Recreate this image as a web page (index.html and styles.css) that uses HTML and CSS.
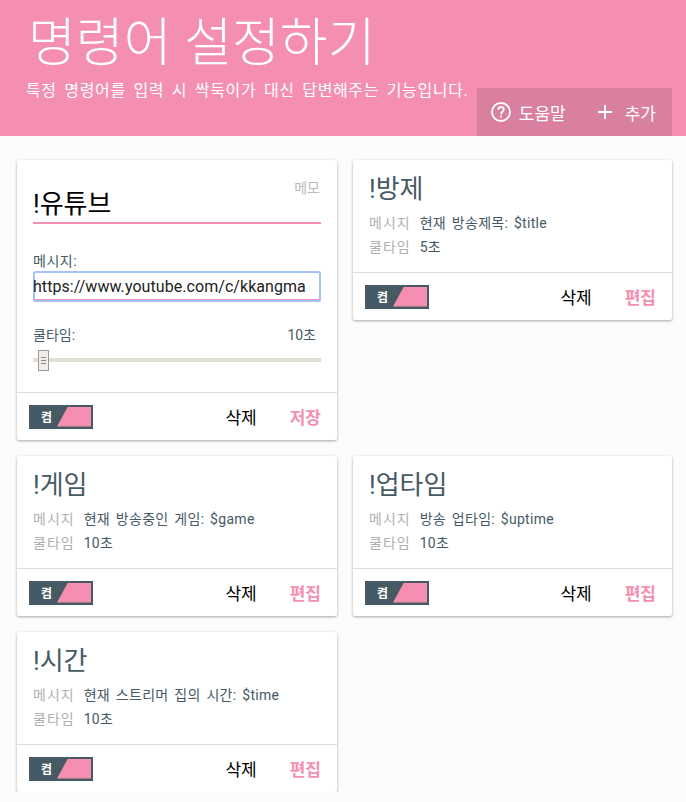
FILE: index.html
```html
<!DOCTYPE html>
<html lang="ko">
<head>
	<meta charset="utf-8">
	<title>명령어 설정하기</title>
	<link rel="stylesheet" href="styles.css">
</head>
<body>
	<div class="header">
		<div class="header-text">
			<h1>명령어 설정하기</h1>
			<p>특정 명령어를 입력 시 싹둑이가 대신 답변해주는 기능입니다.</p>
		</div>
		<div class="actions">
			<span class="action">
				<svg width="22" height="22" viewBox="0 0 22 22" fill="none" stroke="#fff">
					<circle cx="11" cy="11" r="9" stroke-width="1.8"/>
					<path d="M8.2 8.8c0-1.7 1.2-2.8 2.8-2.8s2.8 1 2.8 2.6c0 2.2-2.8 2.2-2.8 4.6" stroke-width="1.8"/>
					<path d="M11 14.6v2" stroke-width="1.8"/>
				</svg>
				도움말
			</span>
			<span class="action">
				<svg class="plus" width="18" height="18" viewBox="0 0 18 18" fill="none" stroke="#fff" stroke-width="2">
					<path d="M9 2v14M2 9h14"/>
				</svg>
				추가
			</span>
		</div>
	</div>

	<div class="cards">
		<div class="card card-edit">
			<div class="card-body">
				<span class="memo">메모</span>
				<input class="name-input" type="text" value="!유튜브">
				<label class="field-label">메시지:</label>
				<input class="msg-input" type="text" value="https://www.youtube.com/c/kkangma">
				<div class="cool-row">
					<span>쿨타임:</span>
					<span>10초</span>
				</div>
				<div class="slider">
					<div class="thumb"><i></i><i></i><i></i></div>
				</div>
			</div>
			<div class="card-foot">
				<div class="toggle"><span>켬</span><b></b></div>
				<a class="btn">삭제</a>
				<a class="btn btn-pink">저장</a>
			</div>
		</div>

		<div class="card">
			<div class="card-body">
				<h2>!방제</h2>
				<div class="info"><span class="key">메시지</span><span>현재 방송제목: $title</span></div>
				<div class="info"><span class="key">쿨타임</span><span>5초</span></div>
			</div>
			<div class="card-foot">
				<div class="toggle"><span>켬</span><b></b></div>
				<a class="btn">삭제</a>
				<a class="btn btn-pink">편집</a>
			</div>
		</div>

		<div class="card">
			<div class="card-body">
				<h2>!게임</h2>
				<div class="info"><span class="key">메시지</span><span>현재 방송중인 게임: $game</span></div>
				<div class="info"><span class="key">쿨타임</span><span>10초</span></div>
			</div>
			<div class="card-foot">
				<div class="toggle"><span>켬</span><b></b></div>
				<a class="btn">삭제</a>
				<a class="btn btn-pink">편집</a>
			</div>
		</div>

		<div class="card">
			<div class="card-body">
				<h2>!업타임</h2>
				<div class="info"><span class="key">메시지</span><span>방송 업타임: $uptime</span></div>
				<div class="info"><span class="key">쿨타임</span><span>10초</span></div>
			</div>
			<div class="card-foot">
				<div class="toggle"><span>켬</span><b></b></div>
				<a class="btn">삭제</a>
				<a class="btn btn-pink">편집</a>
			</div>
		</div>

		<div class="card">
			<div class="card-body">
				<h2>!시간</h2>
				<div class="info"><span class="key">메시지</span><span>현재 스트리머 집의 시간: $time</span></div>
				<div class="info"><span class="key">쿨타임</span><span>10초</span></div>
			</div>
			<div class="card-foot">
				<div class="toggle"><span>켬</span><b></b></div>
				<a class="btn">삭제</a>
				<a class="btn btn-pink">편집</a>
			</div>
		</div>
	</div>
</body>
</html>
```

FILE: styles.css
```css
* {
	margin: 0;
	padding: 0;
	box-sizing: border-box;
	outline: none;
}
body {
	background: #fcfcfc;
	color: #455a64;
	font-family: Roboto, "Noto Sans CJK KR", sans-serif;
	font-size: 14px;
}

.header {
	display: flex;
	justify-content: space-between;
	height: 136px;
	padding-left: 26px;
	padding-right: 14px;
	background: #f48fb1;
	color: #fff;
}
.header-text h1 {
	margin-top: 15px;
	margin-left: 2px;
	height: 58px;
	line-height: 58px;
	font-size: 52px;
	font-weight: 300;
	white-space: nowrap;
}
.header-text p {
	margin-top: 7px;
	line-height: 21px;
	font-size: 16px;
	letter-spacing: 0.65px;
	word-spacing: 3px;
	white-space: nowrap;
}
.actions {
	display: flex;
	align-items: center;
	align-self: flex-end;
	gap: 30px;
	height: 48px;
	padding: 0 16px 0 13px;
	background: #d97f9f;
	font-size: 17px;
}
.action {
	display: flex;
	align-items: center;
	gap: 7px;
}
.plus {
	margin-right: 4px;
}

.cards {
	display: grid;
	grid-template-columns: 320px 319px;
	gap: 16px;
	align-items: start;
	padding: 24px 0 0 17px;
}
.card {
	background: #fff;
	border-radius: 2px;
	box-shadow: 0 1px 3px rgba(0,0,0,0.35);
}
.card-body {
	height: 112px;
	padding: 12px 16px 0;
}
.card-edit .card-body {
	position: relative;
	height: 232px;
	padding-top: 24px;
}
.card h2 {
	height: 34px;
	line-height: 34px;
	margin-bottom: 5px;
	font-size: 26px;
	font-weight: 400;
}
.info {
	display: flex;
	gap: 9px;
	height: 24px;
	line-height: 24px;
	font-size: 14px;
	letter-spacing: 0.3px;
	word-spacing: 2px;
}
.key {
	color: #b0b0b0;
	letter-spacing: 1px;
}

.memo {
	position: absolute;
	top: 17px;
	right: 17px;
	color: #bbb;
	font-size: 14px;
}
.name-input {
	display: block;
	width: 100%;
	height: 40px;
	padding-bottom: 4px;
	border: 0;
	border-bottom: 2px solid #f48fb1;
	background: none;
	color: #000;
	font-family: inherit;
	font-size: 26px;
}
.field-label {
	display: block;
	margin-top: 27px;
	line-height: 20px;
	font-size: 14px;
	letter-spacing: 0.5px;
}
.msg-input {
	display: block;
	width: 100%;
	height: 31px;
	border: 0;
	border-radius: 3px;
	box-shadow: inset 0 0 0 2px #a3c2fa, inset 0 -3px 0 0 #f48fb1;
	background: #fff;
	color: #222;
	font-family: inherit;
	font-size: 16px;
	letter-spacing: 0.06px;
}
.cool-row {
	display: flex;
	justify-content: space-between;
	margin-top: 23px;
	padding-right: 5px;
	line-height: 20px;
	font-size: 14px;
}
.slider {
	position: relative;
	height: 4px;
	margin-top: 13px;
	background: #e2ddd5;
}
.thumb {
	position: absolute;
	top: -8px;
	left: 5px;
	display: flex;
	flex-direction: column;
	justify-content: center;
	gap: 2px;
	width: 11px;
	height: 21px;
	padding: 0 2px;
	border: 1px solid #a09a92;
	background: #f1eee9;
}
.thumb i {
	height: 1px;
	background: #8f8a84;
}

.card-foot {
	display: flex;
	align-items: center;
	height: 48px;
	padding: 0 16px 0 12px;
	border-top: 1px solid #ddd;
}
.toggle {
	display: flex;
	align-items: center;
	width: 64px;
	height: 24px;
	margin-right: auto;
	padding: 2px;
	background: #455a64;
	color: #fff;
}
.toggle span {
	width: 26px;
	padding-left: 10px;
	font-size: 12px;
	font-weight: 700;
}
.toggle b {
	flex: 1;
	height: 20px;
	background: #f48fb1;
	clip-path: polygon(32% 0, 100% 0, 100% 100%, 0 100%);
}
.btn {
	margin-left: 33px;
	color: #000;
	font-size: 17px;
}
.btn-pink {
	color: #f48fb1;
	font-weight: 700;
}
```
